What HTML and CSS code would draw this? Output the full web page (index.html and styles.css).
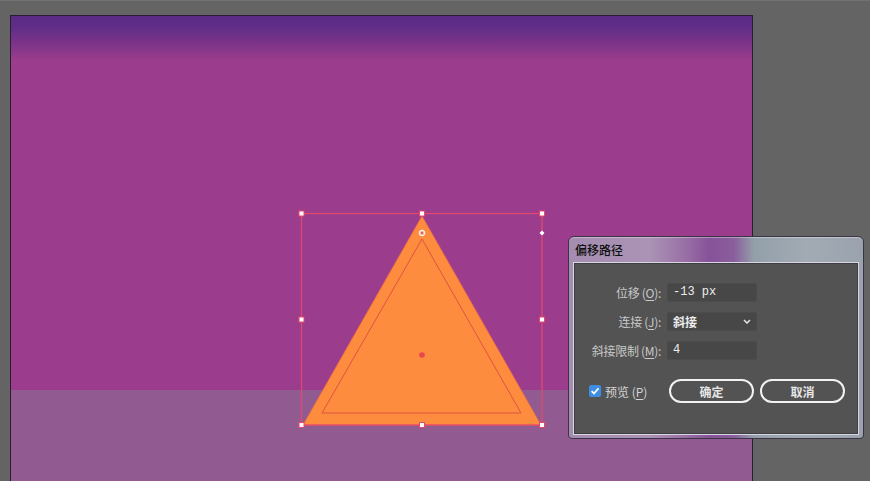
FILE: index.html
```html
<!DOCTYPE html>
<html lang="zh">
<head>
<meta charset="utf-8">
<title>偏移路径</title>
<link rel="stylesheet" href="styles.css">
</head>
<body>
<div class="workspace">
  <div class="artboard"></div>
  <svg class="canvas" width="870" height="481" viewBox="0 0 870 481" xmlns="http://www.w3.org/2000/svg">
    <polygon points="422,215 303,424 541,424" fill="#fe8c3e" stroke="#ec6a46" stroke-width="0.8"/>
    <polygon points="422,238 322,412 521,412" fill="none" stroke="#de5242" stroke-width="1"/>
    <rect x="301.5" y="212.5" width="240.5" height="211.5" fill="none" stroke="#e6486c" stroke-width="1.2"/>
    <g fill="#ffffff" stroke="#e6486c" stroke-width="1">
      <rect x="299" y="210" width="5" height="5"/>
      <rect x="419.5" y="210" width="5" height="5"/>
      <rect x="539.5" y="210" width="5" height="5"/>
      <rect x="299" y="316" width="5" height="5"/>
      <rect x="539.5" y="316" width="5" height="5"/>
      <rect x="299" y="421.5" width="5" height="5"/>
      <rect x="419.5" y="421.5" width="5" height="5"/>
      <rect x="539.5" y="421.5" width="5" height="5"/>
    </g>
    <circle cx="422" cy="232" r="2.8" fill="#f6b3a0" stroke="#ffffff" stroke-width="1"/>
    <circle cx="422" cy="232" r="0.9" fill="#d8404a"/>
    <polygon points="542,229.5 544.5,232 542,234.5 539.5,232" fill="#ffffff"/>
    <circle cx="422" cy="354" r="2.8" fill="#e8474d"/>
  </svg>

  <div class="dialog">
    <div class="dialog-title">偏移路径</div>
    <div class="panel">
      <div class="form">
        <label class="label">位移 (<u>O</u>):</label>
        <div class="field mono">-13 px</div>
        <label class="label">连接 (<u>J</u>):</label>
        <div class="field select">
          <span>斜接</span>
          <svg class="chev" width="8" height="5" viewBox="0 0 8 5"><path d="M1 1 L4 4 L7 1" fill="none" stroke="#e6e6e6" stroke-width="1.5"/></svg>
        </div>
        <label class="label">斜接限制 (<u>M</u>):</label>
        <div class="field mono">4</div>
      </div>
      <div class="actions">
        <div class="preview">
          <span class="check">
            <svg width="12" height="12" viewBox="0 0 12 12"><path d="M2.6 6.1 L5 8.5 L9.5 3.4" fill="none" stroke="#ffffff" stroke-width="1.8"/></svg>
          </span>
          <span class="preview-text">预览 (<u>P</u>)</span>
        </div>
        <div class="btn">确定</div>
        <div class="btn">取消</div>
      </div>
    </div>
  </div>
</div>
</body>
</html>
```
FILE: styles.css
```css
html, body {
  margin: 0;
  padding: 0;
}
body {
  background: #646464;
  font-family: "Noto Sans CJK SC", "Noto Sans", sans-serif;
  overflow: hidden;
}
.workspace {
  position: relative;
  width: 870px;
  height: 481px;
  box-sizing: border-box;
  border-top: 1px solid #727272;
  padding: 14px 0 0 10px;
}
.artboard {
  width: 741px;
  height: 470px;
  border: 1px solid #2a1d33;
  border-bottom: none;
  background: linear-gradient(to bottom,
    #5a2b86 0px,
    #5e2d87 10px,
    #7d3489 28px,
    #9b3c8c 44px,
    #9b3c8c 374px,
    #915b91 374px,
    #915b91 100%);
}
.canvas {
  position: absolute;
  left: 0;
  top: 0;
}
.dialog {
  position: absolute;
  left: 568px;
  top: 235px;
  width: 296px;
  height: 203px;
  box-sizing: border-box;
  border: 1px solid #3c3444;
  border-radius: 6px 6px 4px 4px;
  background:
    linear-gradient(to right,
      #a58db1 0px,
      #ab93b6 80px,
      #9a71a6 115px,
      #87529a 140px,
      #8a5e9c 165px,
      #93a0aa 185px,
      #a2abb4 240px,
      #9aa3ad 100%);
  padding: 0 4px 3px 4px;
  display: flex;
  flex-direction: column;
  box-shadow: inset 0 1px 0 rgba(255,255,255,0.35);
}
.dialog-title {
  height: 25px;
  display: flex;
  align-items: center;
  padding-left: 2px;
  font-size: 12px;
  font-weight: 500;
  color: #111111;
}
.panel {
  flex: 1;
  background: #535353;
  border: 1px solid #d8d6e0;
  box-shadow: inset 0 0 0 1px #3e3e44;
  display: flex;
  flex-direction: column;
  padding: 20px 0 0 0;
}
.form {
  display: grid;
  grid-template-columns: 89px 90px;
  column-gap: 4px;
  row-gap: 10px;
}
.label {
  font-size: 12px;
  color: #c8c8c8;
  text-align: right;
  line-height: 19px;
  white-space: nowrap;
  letter-spacing: -0.3px;
  padding-right: 2px;
}
.label u, .preview-text u {
  text-decoration-thickness: 1px;
  text-underline-offset: 2px;
}
.field {
  height: 19px;
  box-sizing: border-box;
  background: #474747;
  border: 1px solid #4c4c4c;
  border-radius: 2px;
  color: #ececec;
  font-size: 12px;
  line-height: 17px;
  padding-left: 5px;
}
.mono {
  font-family: "Liberation Mono", "DejaVu Sans Mono", monospace;
}
.select {
  display: flex;
  align-items: center;
  justify-content: space-between;
  padding-right: 5px;
  font-weight: bold;
  font-family: "Noto Sans CJK SC", sans-serif;
}
.chev {
  display: block;
}
.actions {
  display: flex;
  align-items: center;
  margin-top: 19px;
  padding-left: 15px;
}
.preview {
  width: 80px;
  display: flex;
  align-items: center;
  gap: 4px;
}
.check {
  width: 12px;
  height: 12px;
  border-radius: 2px;
  background: #3d8ee2;
  display: flex;
}
.preview-text {
  font-size: 12px;
  color: #d4d4d4;
}
.btn {
  width: 85px;
  height: 24px;
  box-sizing: border-box;
  border: 2px solid #f2f2f2;
  border-radius: 12px;
  display: flex;
  align-items: center;
  justify-content: center;
  font-size: 12px;
  font-weight: bold;
  color: #e6e6e6;
  margin-right: 6px;
}
```
